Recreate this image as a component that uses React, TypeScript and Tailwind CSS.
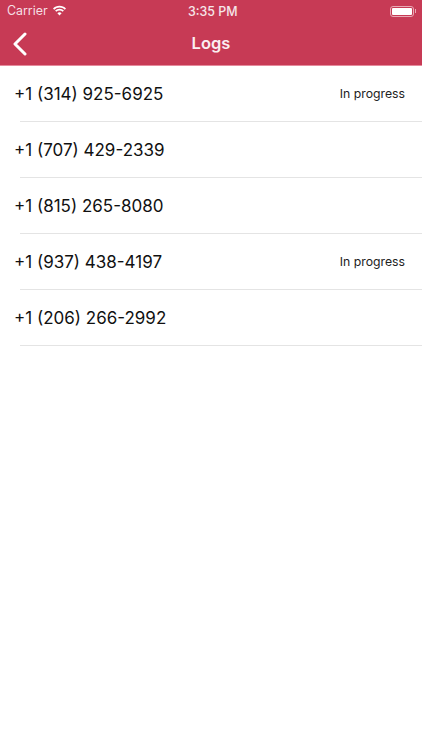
import React from 'react';

const logs = [
  { phone: '+1 (314) 925-6925', status: 'In progress' },
  { phone: '+1 (707) 429-2339' },
  { phone: '+1 (815) 265-8080' },
  { phone: '+1 (937) 438-4197', status: 'In progress' },
  { phone: '+1 (206) 266-2992' },
];

export default function App() {
  return (
    <div className="w-[422px] h-[750px] bg-white overflow-hidden font-['Inter','Liberation_Sans',sans-serif]">
      {/* Status bar + nav */}
      <div className="bg-[#c73a55] h-[66px] border-b border-[#e58a9c] text-white">
        <div className="h-[22px] flex items-center justify-between pl-[7px] pr-[6px] text-[12.4px] relative">
          <div className="flex items-center gap-[4px]">
            <span className="text-[#f6dfe4]">Carrier</span>
            <svg width="15" height="11" viewBox="0 0 15 11" fill="white">
              <path d="M7.5 2.6c2 0 3.9.8 5.3 2.1l1.2-1.3C12.3 1.7 10 .8 7.5.8S2.7 1.7 1 3.4l1.2 1.3a7.7 7.7 0 0 1 5.3-2.1z" />
              <path d="M7.5 5.6c1.2 0 2.3.4 3.2 1.2l1.2-1.3a6.5 6.5 0 0 0-8.800 0l1.200 1.300c.9-.8 2-1.200 3.200-1.200z" />
              <path d="M7.500 10.500l2.100-2.300a3.100 3.100 0 0 0-4.200 0z" />
            </svg>
          </div>
          <span className="absolute left-[188px] top-[3px] text-[#f6e6e9] font-medium">3:35 PM</span>
          <div className="flex items-center">
            <div className="w-[24px] h-[11px] rounded-[3px] border border-[#e9a9b5] p-[1px]">
              <div className="w-full h-full bg-white rounded-[1px]" />
            </div>
            <div className="w-[1px] h-[4px] bg-[#e9a9b5] ml-[1px]" />
          </div>
        </div>
        <div className="h-[43px] relative flex items-center justify-center">
          <svg className="absolute left-[13px] top-[10px]" width="14" height="24" viewBox="0 0 14 24" fill="none" stroke="white" strokeWidth="3" strokeLinecap="round" strokeLinejoin="round">
            <path d="M12 2 L2 12 L12 22" />
          </svg>
          <span className="text-[16.5px] font-semibold text-[#fbeff1]">Logs</span>
        </div>
      </div>

      {/* List */}
      <div>
        {logs.map((log) => (
          <div key={log.phone} className="h-[56px] pl-[20px]">
            <div className="h-[56px] pt-[1px] flex items-center justify-between pr-[17px] border-b border-[#e4e4e4]">
              <span className="-ml-[6px] mt-[2px] text-[17px] text-[#111]">{log.phone}</span>
              {log.status && <span className="text-[12.25px] text-[#222]">{log.status}</span>}
            </div>
          </div>
        ))}
      </div>
    </div>
  );
}
